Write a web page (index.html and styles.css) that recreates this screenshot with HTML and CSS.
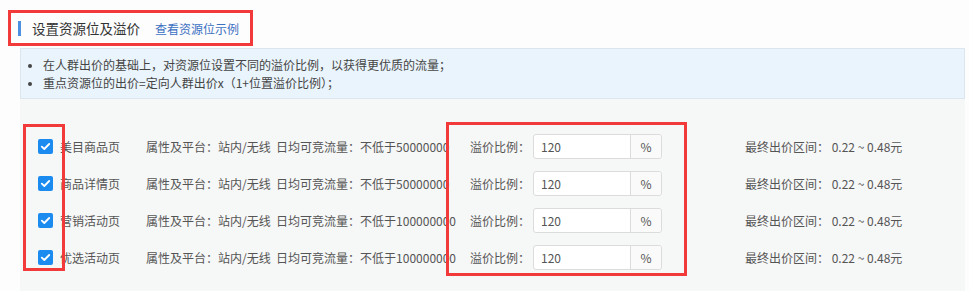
FILE: index.html
```html
<!DOCTYPE html>
<html lang="zh">
<head>
<meta charset="utf-8">
<link rel="stylesheet" href="styles.css">
</head>
<body>
<div class="header">
  <span class="bar"></span>
  <span class="title">设置资源位及溢价</span>
  <a class="link">查看资源位示例</a>
</div>
<div class="panel">
  <ul class="tips">
    <li>在人群出价的基础上，对资源位设置不同的溢价比例，以获得更优质的流量；</li>
    <li>重点资源位的出价=定向人群出价x（1+位置溢价比例）；</li>
  </ul>
  <div class="rows">
    <div class="row">
      <span class="check"><svg viewBox="0 0 15 15" width="15" height="15"><path d="M3.8 7.6l2.5 2.4 4.9-5" fill="none" stroke="#fff" stroke-width="1.8" stroke-linecap="round" stroke-linejoin="round"/></svg></span>
      <span class="name">美目商品页</span>
      <span class="attrs">属性及平台：站内/无线&nbsp; 日均可竞流量：不低于50000000</span>
      <span class="ratio-label">溢价比例：</span>
      <span class="input"><span class="val">120</span><span class="unit">%</span></span>
      <span class="final">最终出价区间：&nbsp;0.22 ~ 0.48元</span>
    </div>
    <div class="row">
      <span class="check"><svg viewBox="0 0 15 15" width="15" height="15"><path d="M3.8 7.6l2.5 2.4 4.9-5" fill="none" stroke="#fff" stroke-width="1.8" stroke-linecap="round" stroke-linejoin="round"/></svg></span>
      <span class="name">商品详情页</span>
      <span class="attrs">属性及平台：站内/无线&nbsp; 日均可竞流量：不低于50000000</span>
      <span class="ratio-label">溢价比例：</span>
      <span class="input"><span class="val">120</span><span class="unit">%</span></span>
      <span class="final">最终出价区间：&nbsp;0.22 ~ 0.48元</span>
    </div>
    <div class="row">
      <span class="check"><svg viewBox="0 0 15 15" width="15" height="15"><path d="M3.8 7.6l2.5 2.4 4.9-5" fill="none" stroke="#fff" stroke-width="1.8" stroke-linecap="round" stroke-linejoin="round"/></svg></span>
      <span class="name">营销活动页</span>
      <span class="attrs">属性及平台：站内/无线&nbsp; 日均可竞流量：不低于100000000</span>
      <span class="ratio-label">溢价比例：</span>
      <span class="input"><span class="val">120</span><span class="unit">%</span></span>
      <span class="final">最终出价区间：&nbsp;0.22 ~ 0.48元</span>
    </div>
    <div class="row">
      <span class="check"><svg viewBox="0 0 15 15" width="15" height="15"><path d="M3.8 7.6l2.5 2.4 4.9-5" fill="none" stroke="#fff" stroke-width="1.8" stroke-linecap="round" stroke-linejoin="round"/></svg></span>
      <span class="name">优选活动页</span>
      <span class="attrs">属性及平台：站内/无线&nbsp; 日均可竞流量：不低于100000000</span>
      <span class="ratio-label">溢价比例：</span>
      <span class="input"><span class="val">120</span><span class="unit">%</span></span>
      <span class="final">最终出价区间：&nbsp;0.22 ~ 0.48元</span>
    </div>
  </div>
</div>
<div class="mark mark-check"></div>
<div class="mark mark-ratio"></div>
</body>
</html>
```
FILE: styles.css
```css
html, body {
  margin: 0;
  padding: 0;
}
body {
  position: relative;
  width: 969px;
  height: 291px;
  overflow: hidden;
  background: #fdfdfd;
  font-family: "Noto Sans CJK SC", "Noto Sans", sans-serif;
  font-size: 12px;
  color: #555;
}
.header {
  box-sizing: border-box;
  margin: 10px 0 0 8px;
  width: 245px;
  height: 36px;
  border: 3px solid #f23a3a;
  display: flex;
  align-items: center;
  padding-left: 7px;
}
.bar {
  width: 3px;
  height: 15px;
  background: #4d8fe0;
  margin-right: 11px;
}
.title {
  font-size: 13.5px;
  color: #333;
  margin-right: 15px;
}
.link {
  font-size: 12px;
  color: #3b70c2;
}
.panel {
  margin: 2px 4px 0 20px;
  background: #f6f7f7;
  height: 243px;
}
.tips {
  box-sizing: border-box;
  margin: 0;
  height: 51px;
  padding: 7px 0 0 22px;
  background: #eaf4fc;
  border: 1px solid #dde6ee;
  list-style: disc;
  color: #444;
  line-height: 18px;
}
.tips li::marker {
  font-size: 10px;
}
.rows {
  padding-top: 29px;
}
.row {
  display: flex;
  align-items: center;
  height: 37px;
  padding-left: 18px;
  white-space: nowrap;
}
.check {
  width: 15px;
  height: 15px;
  border-radius: 2px;
  background: #1c8bf0;
  display: flex;
  margin-right: 7px;
}
.name {
  width: 86px;
}
.attrs {
  width: 324px;
}
.ratio-label {
  width: 63px;
}
.input {
  box-sizing: border-box;
  width: 129px;
  height: 25px;
  border: 1px solid #dcdcdc;
  border-radius: 3px;
  background: #fff;
  display: flex;
  align-items: stretch;
}
.val {
  flex: 1;
  padding-left: 7px;
  display: flex;
  align-items: center;
  border-right: 1px solid #dcdcdc;
  color: #555;
}
.unit {
  width: 30px;
  display: flex;
  align-items: center;
  justify-content: center;
  background: #fafafa;
  border-radius: 0 3px 3px 0;
}
.final {
  margin-left: 83px;
}
.mark {
  position: absolute;
  box-sizing: border-box;
  border: 3px solid #f23a3a;
}
.mark-check {
  left: 23px;
  top: 124px;
  width: 42px;
  height: 147px;
}
.mark-ratio {
  left: 446px;
  top: 122px;
  width: 241px;
  height: 154px;
}
```
